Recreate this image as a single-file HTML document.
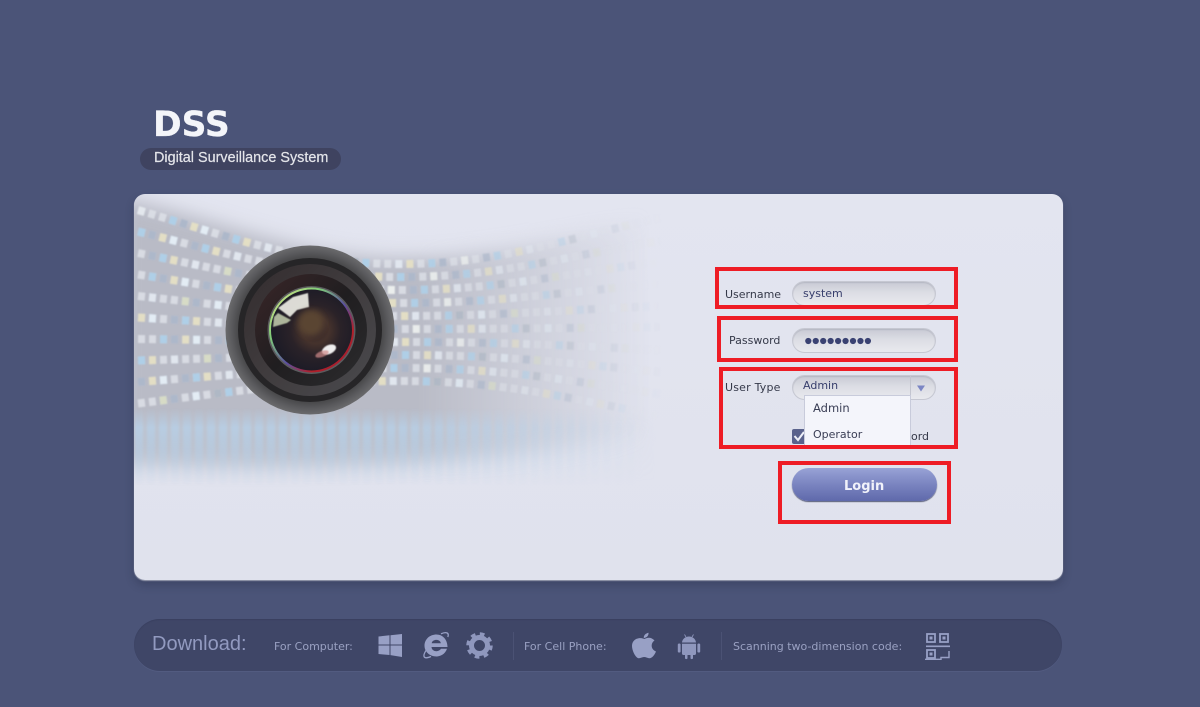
<!DOCTYPE html>
<html>
<head>
<meta charset="utf-8">
<title>DSS</title>
<style>
html,body{margin:0;padding:0;width:1200px;height:707px;overflow:hidden;background:#4b5478}
body{position:relative;font-family:"DejaVu Sans","Liberation Sans",sans-serif}
.a{position:absolute;white-space:nowrap}
#card{left:134px;top:194px;width:929px;height:386px;border-radius:11px;background:linear-gradient(#e3e5f0,#e0e2ed);box-shadow:0 1px 1px #9a9eb0,0 5px 9px rgba(30,35,60,.3)}
#bar{left:134px;top:619px;width:928px;height:52px;border-radius:26px;background:#3f4667;box-shadow:inset 0 1px 1px #3a4060,0 1px 0 #525b80}
.lbl{font-size:11px;color:#353949;line-height:14px}
.inp{left:792px;width:142px;height:23px;border:1.5px solid #c6c8d2;border-radius:13px;background:linear-gradient(#c8cad4,#dcdde4 45%,#e8e9ee);box-shadow:inset 0 1px 1px #b6b8c4}
.val{font-size:11px;color:#373e6c;line-height:14px}
.red{border:4px solid #ee1c25;box-sizing:border-box}
.dl{font-size:11px;color:#9aa1c2;line-height:14px}
</style>
</head>
<body>
<div class="a" style="left:153px;top:104px;font:bold 34.5px/42px 'DejaVu Sans',sans-serif;color:#f4f5f9;-webkit-text-stroke:.3px #f4f5f9">DSS</div>
<div class="a" style="left:140px;top:148px;width:201px;height:22px;border-radius:11px;background:#3f4360"></div>
<div class="a" style="left:154px;top:150px;font:14.4px/17px 'Liberation Sans',sans-serif;color:#e4e5ea;-webkit-text-stroke:.2px #e4e5ea">Digital Surveillance System</div>

<div class="a" id="card"></div>

<svg class="a" style="left:0;top:0" width="1200" height="707" viewBox="0 0 1200 707">
<defs>
<clipPath id="cc"><rect x="134" y="194" width="929" height="386" rx="11"/></clipPath>
<linearGradient id="fh" gradientUnits="userSpaceOnUse" x1="134" y1="0" x2="670" y2="0">
<stop offset="0" stop-color="#fff"/><stop offset=".5" stop-color="#fff"/><stop offset=".65" stop-color="#bbb"/><stop offset=".8" stop-color="#666"/><stop offset=".92" stop-color="#222"/><stop offset="1" stop-color="#000"/>
</linearGradient>
<linearGradient id="fz" gradientUnits="userSpaceOnUse" x1="134" y1="0" x2="650" y2="0">
<stop offset="0" stop-color="#fff"/><stop offset=".55" stop-color="#fff"/><stop offset=".75" stop-color="#888"/><stop offset="1" stop-color="#000"/>
</linearGradient>
<mask id="mh" maskUnits="userSpaceOnUse" x="134" y="194" width="600" height="386"><rect x="134" y="194" width="600" height="386" fill="url(#fh)"/></mask>
<mask id="mz" maskUnits="userSpaceOnUse" x="134" y="194" width="600" height="386"><rect x="134" y="194" width="600" height="386" fill="url(#fz)"/></mask>
<linearGradient id="fs" gradientUnits="userSpaceOnUse" x1="0" y1="408" x2="0" y2="486">
<stop offset="0" stop-color="#000"/><stop offset=".25" stop-color="#fff"/><stop offset=".6" stop-color="#aaa"/><stop offset="1" stop-color="#000"/>
</linearGradient>
<mask id="ms" maskUnits="userSpaceOnUse" x="134" y="400" width="600" height="90"><rect x="134" y="400" width="600" height="90" fill="url(#fs)"/></mask>
<filter id="b12" x="-10%" y="-20%" width="120%" height="140%"><feGaussianBlur stdDeviation="9"/></filter>
<filter id="b1" x="-2%" y="-5%" width="104%" height="110%"><feGaussianBlur stdDeviation=".7"/></filter>
<filter id="b2" x="-2%" y="-10%" width="104%" height="120%"><feGaussianBlur stdDeviation="1.4"/></filter>
<filter id="b05" x="-20%" y="-20%" width="140%" height="140%"><feGaussianBlur stdDeviation=".6"/></filter>
<filter id="b3" x="-50%" y="-50%" width="200%" height="200%"><feGaussianBlur stdDeviation="3"/></filter>
<filter id="bi" x="-2%" y="-20%" width="104%" height="140%"><feGaussianBlur stdDeviation=".35"/></filter>
<radialGradient id="lo" cx=".5" cy=".5" r=".5"><stop offset=".85" stop-color="#48484a"/><stop offset=".93" stop-color="#5b5b5e"/><stop offset="1" stop-color="#6a6a6c"/></radialGradient>
<linearGradient id="lr" x1="0" y1="0" x2="1" y2="1"><stop offset="0" stop-color="#332c2e"/><stop offset=".5" stop-color="#403c3e"/><stop offset="1" stop-color="#4a4a4e"/></linearGradient>
<radialGradient id="lg" cx=".55" cy=".5" r=".55"><stop offset="0" stop-color="#38282a"/><stop offset=".3" stop-color="#45322c"/><stop offset=".55" stop-color="#2a2228"/><stop offset="1" stop-color="#1a1a26"/></radialGradient>
<linearGradient id="lm" x1="0" y1="0" x2="1" y2="1"><stop offset="0" stop-color="#3a2628"/><stop offset=".5" stop-color="#201e20"/><stop offset="1" stop-color="#2c2c2e"/></linearGradient>
<linearGradient id="rb" x1="0" y1="0" x2="1" y2="1"><stop offset="0" stop-color="#e8e88c"/><stop offset=".3" stop-color="#7ecb78"/><stop offset=".55" stop-color="#5a4ea0"/><stop offset=".75" stop-color="#b0202a"/><stop offset="1" stop-color="#a01a30"/></linearGradient>
<g id="rows" fill="none">
<path stroke-dashoffset="0" d="M138 210C230 237 300 264 400 264C500 264 560 240 660 218"/>
<path stroke-dashoffset="33" d="M138 231.500C230 254 300 277 400 277C500 277 560 257 660 241"/>
<path stroke-dashoffset="77" d="M138 253C230 271 300 290 400 290C500 290 560 274 660 262"/>
<path stroke-dashoffset="22" d="M138 274.500C230 289 300 303 400 303C500 303 560 292 660 284"/>
<path stroke-dashoffset="121" d="M138 296C230 306 300 316 400 316C500 316 560 310 660 306"/>
<path stroke-dashoffset="55" d="M138 317.500C230 323 300 329 400 329C500 329 560 328 660 327"/>
<path stroke-dashoffset="11" d="M138 339C230 340 300 342 400 342C500 342 560 345 660 350"/>
<path stroke-dashoffset="99" d="M138 360.500C230 358 300 355 400 355C500 355 560 362 660 372"/>
<path stroke-dashoffset="44" d="M138 382C230 375 300 368 400 368C500 368 560 379 660 394"/>
<path stroke-dashoffset="143" d="M138 403.500C230 392 300 381 400 381C500 381 560 396 660 416"/>
</g>
</defs>
<g clip-path="url(#cc)">
<g mask="url(#mz)">
<path d="M120 198C220 218 300 258 400 258C480 258 560 238 680 215L680 425C560 462 300 470 120 462Z" fill="#b9bbc6" filter="url(#b12)"/>
</g>
<g mask="url(#mh)">
<g filter="url(#b1)">
<use href="#rows" stroke="#dde0e8" stroke-width="8" stroke-opacity=".85" stroke-dasharray="7 4"/>
<use href="#rows" stroke="#a8cde8" stroke-width="8" stroke-opacity=".85" stroke-dasharray="7 26"/>
<use href="#rows" stroke="#e8dfb8" stroke-width="8" stroke-opacity=".7" stroke-dasharray="7 48"/>
<use href="#rows" stroke="#a6b2c6" stroke-width="8" stroke-opacity=".85" stroke-dasharray="7 37"/>
<use href="#rows" stroke="#f0f2f6" stroke-width="8" stroke-opacity=".8" stroke-dasharray="7 59"/>
</g>
<g mask="url(#ms)" filter="url(#b2)">
<path d="M135 445H640" fill="none" stroke="#aecfee" stroke-width="80" stroke-dasharray="8 4" stroke-opacity=".65"/>
<rect x="134" y="410" width="520" height="70" fill="#c6d4e6" opacity=".35"/>
</g>
</g>
</g>

<!-- lens -->
<circle cx="310" cy="330" r="84.500" fill="url(#lo)"/>
<circle cx="310" cy="330" r="72" fill="#262527"/>
<circle cx="310" cy="330" r="66" fill="url(#lr)"/>
<circle cx="311" cy="330" r="56" fill="url(#lm)"/>
<circle cx="311.500" cy="330" r="44" fill="#5b5b5e"/>
<circle cx="311.500" cy="330" r="41.500" fill="url(#lg)" stroke="url(#rb)" stroke-width="2"/>
<path d="M278 308L293 297L308 293L309 307L297 310L290 317Z" fill="#ecece4" opacity=".92" filter="url(#b05)"/>
<path d="M274 317L278 313L291 320L287 323L273 327Z" fill="#c5d0b0" opacity=".85" filter="url(#b05)"/>
<circle cx="311" cy="323" r="13" fill="#5a4430" filter="url(#b3)"/>
<ellipse cx="329" cy="349.500" rx="7.500" ry="4.500" transform="rotate(-25 329 349.500)" fill="#fff" opacity=".92" filter="url(#b05)"/>
<ellipse cx="322" cy="354" rx="7" ry="3" transform="rotate(-20 322 354)" fill="#d08a8a" opacity=".7" filter="url(#b05)"/>
</svg>

<!-- form -->
<div class="a lbl" style="left:725px;top:288px">Username</div>
<div class="a inp" style="top:281px"></div>
<div class="a val" style="left:803px;top:287px">system</div>

<div class="a lbl" style="left:729px;top:334px">Password</div>
<div class="a inp" style="top:328px"></div>
<svg class="a" style="left:804px;top:336px" width="70" height="10"><g fill="#3a4272"><circle cx="4.300" cy="5" r="3.100"/><circle cx="11.750" cy="5" r="3.100"/><circle cx="19.200" cy="5" r="3.100"/><circle cx="26.650" cy="5" r="3.100"/><circle cx="34.100" cy="5" r="3.100"/><circle cx="41.550" cy="5" r="3.100"/><circle cx="49" cy="5" r="3.100"/><circle cx="56.450" cy="5" r="3.100"/><circle cx="63.900" cy="5" r="3.100"/></g></svg>

<div class="a lbl" style="left:725px;top:381px;letter-spacing:.2px">User Type</div>
<div class="a inp" style="top:375px;height:23px"></div>
<div class="a" style="left:910px;top:376px;width:1px;height:24px;background:#c3c5cf"></div>
<svg class="a" style="left:916px;top:384px" width="10" height="9"><path d="M1 1.500H9L5 7.500Z" fill="#7b86c4"/></svg>
<div class="a val" style="left:803px;top:379px">Admin</div>

<div class="a" style="left:792px;top:429px;width:15px;height:15px;background:#5a628c;border-radius:2px"></div>
<svg class="a" style="left:793px;top:430px" width="12" height="12"><path d="M1.500 6L5 10L11 2" fill="none" stroke="#eef0f8" stroke-width="2"/></svg>
<div class="a lbl" style="left:911px;top:430px">ord</div>

<div class="a" style="left:804px;top:395px;width:105px;height:50px;background:#f4f5fb;border:1px solid #c8cbdb;border-bottom:0;box-sizing:content-box"></div>
<div class="a" style="left:813px;top:401px;font-size:11.500px;line-height:15px;color:#3a3e55">Admin</div>
<div class="a" style="left:813px;top:427px;font-size:11px;line-height:15px;color:#3a3e55">Operator</div>

<div class="a" style="left:792px;top:468px;width:145px;height:33px;border-radius:17px;background:linear-gradient(#98a2d6,#7a84c0 50%,#5f69ab);box-shadow:0 1px 1px #555a78"></div>
<div class="a" style="left:844px;top:478px;font:bold 13px/17px 'DejaVu Sans',sans-serif;color:#f1f2fa">Login</div>

<!-- red boxes -->
<div class="a red" style="left:715px;top:267px;width:243px;height:42px"></div>
<div class="a red" style="left:717px;top:316px;width:241px;height:46px"></div>
<div class="a red" style="left:719px;top:367px;width:239px;height:82px"></div>
<div class="a red" style="left:778px;top:461px;width:173px;height:63px"></div>

<!-- footer bar -->
<div class="a" id="bar"></div>
<div class="a" style="left:152px;top:632px;font:20px/24px 'Liberation Sans',sans-serif;color:#929ac0">Download:</div>
<div class="a dl" style="left:274px;top:640px">For Computer:</div>
<div class="a dl" style="left:524px;top:640px">For Cell Phone:</div>
<div class="a dl" style="left:733px;top:640px">Scanning two-dimension code:</div>
<div class="a" style="left:513px;top:632px;width:1px;height:28px;background:#4b5274"></div>
<div class="a" style="left:721px;top:632px;width:1px;height:28px;background:#4b5274"></div>

<svg class="a" style="left:370px;top:625px" width="590" height="40" viewBox="370 625 590 40">
<g filter="url(#bi)">
<!-- windows -->
<path d="M378.500 636.500L389.500 635.300V644.500H378.500ZM390.500 635.200L402 634V644.500H390.500ZM378.500 645.500H389.500V655L378.500 654ZM390.500 645.500H402V657L390.500 655.100Z" fill="#98a0c5"/>
<!-- IE -->
<path fill-rule="evenodd" d="M436.500 634.500C443 634.500 447.500 640 447.500 647H431.500C431.800 652 439 652.500 441 648.800H447C445 654.500 440 656.500 436.500 656.500C429.500 656.500 424.500 651.500 424.500 645.800C424.500 639.500 429.500 634.500 436.500 634.500ZM431.700 643.300H440.800C440.500 638.800 432.200 638.800 431.700 643.300Z" fill="#98a0c5"/>
<path d="M441 633.800C446 631.500 449.500 632.500 447.800 637M427 649C422 656 423 660 431 656.500" fill="none" stroke="#98a0c5" stroke-width="1.300"/>
<!-- gear -->
<circle cx="479.500" cy="645.500" r="8" fill="none" stroke="#8f97bd" stroke-width="5"/>
<circle cx="479.500" cy="645.500" r="11.500" fill="none" stroke="#8f97bd" stroke-width="3.500" stroke-dasharray="4.600 4.430"/>
<!-- apple -->
<path d="M644.500 639C648 636.800 652 637.500 654.500 640.500C650.500 643 650.500 649.500 656 651.500C654.500 655 652 658.500 649 658.200C647 658 646 657 644 657C642 657 640.500 658.300 638.800 658.200C635.500 658 632 650.500 632 646C632 639.500 638.500 636.500 644.500 639ZM643.800 638C643.500 635.500 645.500 633.500 648.500 632.800C648.800 635.500 646.800 637.800 643.800 638Z" fill="#98a0c5"/>
<!-- android -->
<path d="M682 642.500C682.300 639 685.200 636.500 689 636.500C692.800 636.500 695.700 639 696 642.500ZM682 643.800H696V653.500C696 654.500 695.300 655 694.500 655H693V658C693 659.500 690.500 659.500 690.500 658V655H687.500V658C687.500 659.500 685 659.500 685 658V655H683.500C682.700 655 682 654.500 682 653.500Z" fill="#8f97bd"/>
<rect x="677.800" y="643.500" width="2.800" height="9" rx="1.300" fill="#8f97bd"/>
<rect x="697.400" y="643.500" width="2.800" height="9" rx="1.300" fill="#8f97bd"/>
<path d="M684.500 634.500L686 637M693.500 634.500L692 637" stroke="#8f97bd" stroke-width=".8"/>
<!-- QR -->
<g fill="none" stroke="#98a0c5" stroke-width="1.800">
<rect x="927" y="634" width="8" height="8"/><rect x="940" y="634" width="8" height="8"/><rect x="927" y="650" width="8" height="8"/>
<path d="M926 646.300H950" stroke-width="1.600"/>
<path d="M949 651V657.500H941V659.300H925" stroke-width="1.400"/>
</g>
<g fill="#98a0c5"><rect x="929.500" y="636.500" width="3" height="3"/><rect x="942.500" y="636.500" width="3" height="3"/><rect x="929.500" y="652.500" width="3" height="3"/></g>
</g>
</svg>
</body>
</html>
